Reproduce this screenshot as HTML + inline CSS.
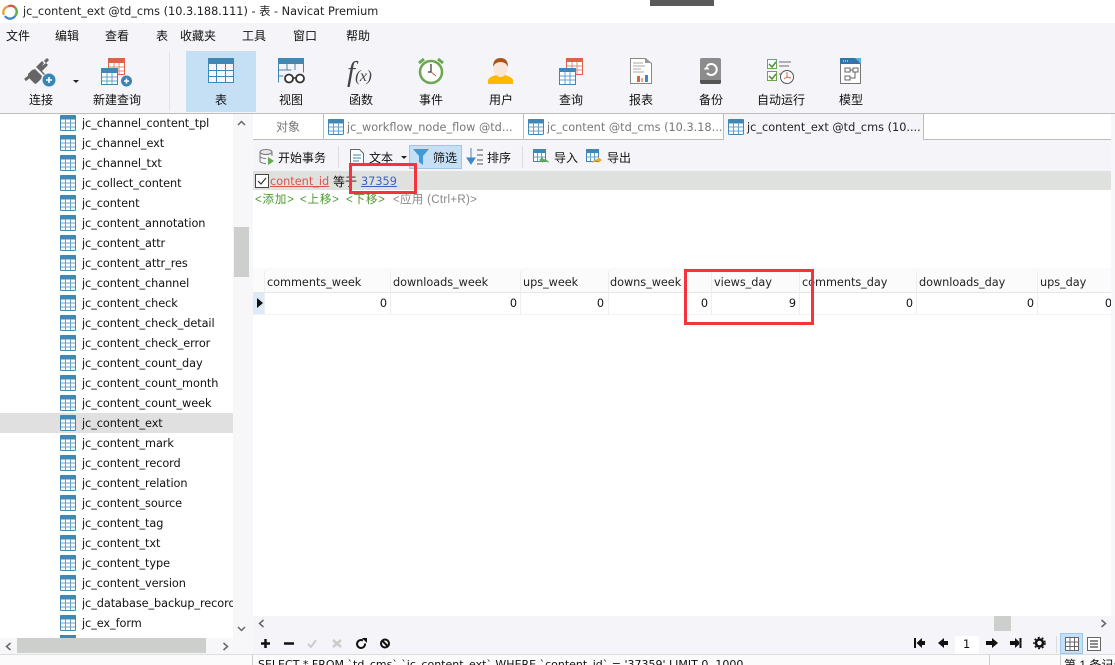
<!DOCTYPE html>
<html><head><meta charset="utf-8"><style>
html,body{margin:0;padding:0;width:1115px;height:665px;overflow:hidden;background:#fff}
body{position:relative;font-family:"Liberation Sans","Noto Sans CJK SC",sans-serif;font-size:12px;color:#111}
.a{position:absolute}
.t{position:absolute;white-space:nowrap;line-height:16px;height:16px}
.m{top:28px;font-size:12px}
.l{top:92px;font-size:12px;text-align:center;width:80px}
.r{left:82px;font-family:"DejaVu Sans",sans-serif;font-size:11.3px;letter-spacing:-.08px;margin-top:1px}
.tb{font-size:12px;top:150px}
.h{top:275px;font-family:"DejaVu Sans",sans-serif;font-size:11.3px;letter-spacing:-.05px;color:#222}
.d{top:296px;font-family:"DejaVu Sans",sans-serif;font-size:11.3px;text-align:right;width:30px}
.v{position:absolute;top:271px;width:1px;height:43px;background:#eeeeee}
.tab{top:120px;font-family:"DejaVu Sans",sans-serif;font-size:11.3px;color:#777}
.g{font-size:11.5px;top:192px;color:#4a9a2a;letter-spacing:.8px}
svg{position:absolute;overflow:visible}
svg:not([width]){width:16px;height:16px}
</style></head><body>
<svg width="0" height="0" style="position:absolute"><defs>
<g id="ti"><rect x=".5" y=".5" width="15" height="15" rx="1" fill="#fff" stroke="#3f87b5"/><rect x="0" y="0" width="16" height="4.5" rx="1" fill="#3f87b5"/><path d="M5.5 4v11M10.5 4v11M1 8h14M1 12h14" stroke="#62a3cd" fill="none"/></g>
</defs></svg>

<!-- title bar -->
<div class="a" style="left:650px;top:0;width:64px;height:6px;background:#5a5a5a"></div>
<svg style="left:2px;top:4px" width="16" height="16" viewBox="0 0 16 16" fill="none" stroke-width="2.4"><path d="M2 11A6 6 0 0 1 6 2.5" stroke="#e8a33c"/><path d="M6 2.5A6 6 0 0 1 13 3.5" stroke="#d9534f"/><path d="M13 3.5A6 6 0 0 1 13 12" stroke="#5fae4b"/><path d="M13 12A6 6 0 0 1 3 12" stroke="#3f87c5"/></svg>
<div class="t" style="left:23px;top:4px;font-family:'DejaVu Sans','Noto Sans CJK SC',sans-serif;font-size:11.3px;color:#222">jc_content_ext @td_cms (10.3.188.111) - 表 - Navicat Premium</div>

<!-- menu + toolbar -->
<div class="a" style="left:0;top:23px;width:1115px;height:90px;background:#f5f4f8"></div>
<div class="a" style="left:0;top:113px;width:1115px;height:1px;background:#bcbcbc"></div>
<div class="t m" style="left:6px">文件</div><div class="t m" style="left:55px">编辑</div><div class="t m" style="left:105px">查看</div><div class="t m" style="left:156px">表</div><div class="t m" style="left:180px">收藏夹</div><div class="t m" style="left:242px">工具</div><div class="t m" style="left:293px">窗口</div><div class="t m" style="left:346px">帮助</div>
<div class="a" style="left:169px;top:52px;width:1px;height:59px;background:#e2e2e4"></div>
<div class="a" style="left:186px;top:51px;width:70px;height:61px;background:#c5dff5"></div>

<!-- connect -->
<svg style="left:24px;top:58px" width="32" height="30" viewBox="0 0 32 30"><path d="M1 22l5-4" stroke="#666" stroke-width="3" fill="none"/><path d="M4 16l4-4 3-1 7 7-1 3-4 4-2 1-7-7z" fill="#666"/><path d="M12 9l6-6 2 2-2 3 4-3 2 2-6 6 3 3-1 1-9-9z" fill="#666"/><path d="M21 4l3-3" stroke="#666" stroke-width="3"/><circle cx="25" cy="22" r="6.5" fill="#3a85b8"/><path d="M22 22h6M25 19v6" stroke="#fff" stroke-width="1.6"/></svg>
<div class="a" style="left:73px;top:80px;border:3.5px solid transparent;border-top:3.5px solid #222"></div>
<div class="t l" style="left:1px">连接</div>
<!-- new query -->
<svg style="left:101px;top:58px" width="32" height="28" viewBox="0 0 32 28"><rect x="7.5" y=".5" width="16" height="16" fill="#fff" stroke="#d9644a"/><rect x="7" y="0" width="17" height="5" fill="#d9644a"/><path d="M13 5v11M18 5v11M8 9h15M8 13h15" stroke="#e08d78"/><rect x=".5" y="10.5" width="16" height="16" fill="#fff" stroke="#3f87b5"/><rect x="0" y="10" width="17" height="5" fill="#3f87b5"/><path d="M6 15v11M11 15v11M1 19h15M1 23h15" stroke="#62a3cd"/><circle cx="25.500" cy="23" r="5.500" fill="#3a85b8"/><path d="M23 23h5M25.500 20.500v5" stroke="#fff" stroke-width="1.500"/></svg>
<div class="t l" style="left:77px">新建查询</div>
<!-- table -->
<svg style="left:208px;top:58px" width="26" height="25" viewBox="0 0 26 25"><rect x=".5" y=".5" width="25" height="24" fill="#f2f8fd" stroke="#3f87b5"/><rect width="26" height="6" fill="#3f87b5"/><path d="M8.500 6v18M17.500 6v18M1 12.500h24M1 18.500h24" stroke="#3f87b5"/></svg>
<div class="t l" style="left:181px">表</div>
<!-- view -->
<svg style="left:278px;top:58px" width="28" height="26" viewBox="0 0 28 26"><path d="M.5 24.500V.5h25v14M.5 12h13M.5 18h5M9 6v6M17 6v6" fill="none" stroke="#3f87b5"/><rect width="26" height="6" fill="#3f87b5"/><circle cx="11" cy="20.500" r="4" fill="#fff" stroke="#333" stroke-width="1.800"/><circle cx="22" cy="20.500" r="4" fill="#fff" stroke="#333" stroke-width="1.800"/><path d="M15 20h3" stroke="#333" stroke-width="1.500"/></svg>
<div class="t l" style="left:251px">视图</div>
<!-- function -->
<div class="t" style="left:347px;top:60px;font-family:'Liberation Serif',serif;font-style:italic;font-size:29px;color:#444;line-height:24px;height:26px">f<span style="font-size:16px;letter-spacing:-.5px">(x)</span></div>
<div class="t l" style="left:321px">函数</div>
<!-- event -->
<svg style="left:417px;top:57px" width="28" height="28" viewBox="0 0 28 28"><circle cx="14" cy="15" r="11" fill="#fff" stroke="#6aa84f" stroke-width="2.500"/><path d="M2 6l5-4M26 6l-5-4" stroke="#6aa84f" stroke-width="3"/><path d="M14 7v8h-3" fill="none" stroke="#333" stroke-width="1.200"/><path d="M14 15l5 4" stroke="#d9534f"/></svg>
<div class="t l" style="left:391px">事件</div>
<!-- user -->
<svg style="left:488px;top:57px" width="25" height="27" viewBox="0 0 25 27"><path d="M0 27v-4q1-3 8-5h9q7 2 8 5v4z" fill="#fdb900"/><ellipse cx="12.500" cy="11" rx="7" ry="9" fill="#fbe4d8"/><path d="M5 10Q5 1 12.500 1T20 10Q18 5 12.500 5T5 10z" fill="#a5571f"/></svg>
<div class="t l" style="left:461px">用户</div>
<!-- query -->
<svg style="left:559px;top:58px" width="25" height="27" viewBox="0 0 25 27"><rect x="7.500" y=".5" width="16" height="16" fill="#fff" stroke="#d9644a"/><rect x="7" y="0" width="17" height="4" fill="#d9644a"/><path d="M13 4v12M18 4v12M8 8h15M8 12h15" stroke="#e08d78"/><rect x=".5" y="10.500" width="16" height="16" fill="#fff" stroke="#3f87b5"/><rect x="0" y="10" width="17" height="4" fill="#3f87b5"/><path d="M6 14v12M11 14v12M1 18h15M1 22h15" stroke="#62a3cd"/></svg>
<div class="t l" style="left:531px">查询</div>
<!-- report -->
<svg style="left:630px;top:58px" width="22" height="26" viewBox="0 0 22 26"><path d="M.5.5h15l6 5v20H.5z" fill="#fff" stroke="#888"/><path d="M15 0l6 5h-6z" fill="#999"/><path d="M3 5h10M3 8h12M3 11h8M3 14h11" stroke="#aaa"/><rect x="7" y="18" width="3" height="6" fill="#e0633f"/><rect x="11" y="20" width="2" height="4" fill="#e8a58f"/><rect x="15" y="17" width="3" height="7" fill="#3f87c5"/></svg>
<div class="t l" style="left:601px">报表</div>
<!-- backup -->
<svg style="left:700px;top:58px" width="21" height="26" viewBox="0 0 21 26"><rect width="21" height="26" rx="2" fill="#8c8c8c"/><path d="M0 22h21v2a2 2 0 0 1-2 2H2a2 2 0 0 1-2-2z" fill="#555"/><path d="M7 8a5.500 5.500 0 1 1 0 7" fill="none" stroke="#fff" stroke-width="2"/><path d="M3.500 11.500h6L7 8z" fill="#fff"/></svg>
<div class="t l" style="left:671px">备份</div>
<!-- autorun -->
<svg style="left:767px;top:59px" width="28" height="26" viewBox="0 0 28 26"><rect x=".5" y=".5" width="9" height="9" fill="#fff" stroke="#6aa84f"/><rect x=".5" y="12.500" width="9" height="9" fill="#fff" stroke="#6aa84f"/><path d="M2 5l3 3 4-5M2 17l3 3 4-5" fill="none" stroke="#4f8f35" stroke-width="1.500"/><path d="M12 3h12M12 7h10M12 15h4" stroke="#999" stroke-width="1.500"/><circle cx="20" cy="18" r="6.500" fill="#fff" stroke="#555"/><path d="M20 13v5l-3 2M20 18l4 1" stroke="#d9644a" fill="none"/></svg>
<div class="t" style="left:757px;top:92px">自动运行</div>
<!-- model -->
<svg style="left:840px;top:58px" width="22" height="26" viewBox="0 0 22 26"><rect x=".5" y=".5" width="20" height="25" fill="#fff" stroke="#777"/><rect width="21" height="6" fill="#2f77a8"/><path d="M15 0h6v6z" fill="#62b0e0"/><path d="M3 3h1M5 3h1M7 3h1" stroke="#fff"/><path d="M5 10h5v4H5zM13 10h5v4h-5zM5 18h5v4H5zM10 12h3M15 14v6h-5" fill="none" stroke="#666"/></svg>
<div class="t l" style="left:811px">模型</div>

<!-- sidebar -->
<div class="a" style="left:0;top:413px;width:233px;height:20px;background:#e0e0e0"></div>
<div class="a" style="left:233px;top:114px;width:20px;height:540px;background:#f7f6f8"></div>
<div class="a" style="left:234px;top:227px;width:15px;height:50px;background:#cdcfcc"></div>
<svg style="left:237px;top:120px" width="9" height="6"><path d="M1 5l3.500-3.500L8 5" fill="none" stroke="#666" stroke-width="1.500"/></svg>
<svg style="left:237px;top:626px" width="9" height="6"><path d="M1 1l3.500 3.500L8 1" fill="none" stroke="#666" stroke-width="1.500"/></svg>

<svg style="left:60px;top:115px"><use href="#ti"/></svg><div class="t r" style="top:115px">jc_channel_content_tpl</div>
<svg style="left:60px;top:135px"><use href="#ti"/></svg><div class="t r" style="top:135px">jc_channel_ext</div>
<svg style="left:60px;top:155px"><use href="#ti"/></svg><div class="t r" style="top:155px">jc_channel_txt</div>
<svg style="left:60px;top:175px"><use href="#ti"/></svg><div class="t r" style="top:175px">jc_collect_content</div>
<svg style="left:60px;top:195px"><use href="#ti"/></svg><div class="t r" style="top:195px">jc_content</div>
<svg style="left:60px;top:215px"><use href="#ti"/></svg><div class="t r" style="top:215px">jc_content_annotation</div>
<svg style="left:60px;top:235px"><use href="#ti"/></svg><div class="t r" style="top:235px">jc_content_attr</div>
<svg style="left:60px;top:255px"><use href="#ti"/></svg><div class="t r" style="top:255px">jc_content_attr_res</div>
<svg style="left:60px;top:275px"><use href="#ti"/></svg><div class="t r" style="top:275px">jc_content_channel</div>
<svg style="left:60px;top:295px"><use href="#ti"/></svg><div class="t r" style="top:295px">jc_content_check</div>
<svg style="left:60px;top:315px"><use href="#ti"/></svg><div class="t r" style="top:315px">jc_content_check_detail</div>
<svg style="left:60px;top:335px"><use href="#ti"/></svg><div class="t r" style="top:335px">jc_content_check_error</div>
<svg style="left:60px;top:355px"><use href="#ti"/></svg><div class="t r" style="top:355px">jc_content_count_day</div>
<svg style="left:60px;top:375px"><use href="#ti"/></svg><div class="t r" style="top:375px">jc_content_count_month</div>
<svg style="left:60px;top:395px"><use href="#ti"/></svg><div class="t r" style="top:395px">jc_content_count_week</div>
<svg style="left:60px;top:415px"><use href="#ti"/></svg><div class="t r" style="top:415px">jc_content_ext</div>
<svg style="left:60px;top:435px"><use href="#ti"/></svg><div class="t r" style="top:435px">jc_content_mark</div>
<svg style="left:60px;top:455px"><use href="#ti"/></svg><div class="t r" style="top:455px">jc_content_record</div>
<svg style="left:60px;top:475px"><use href="#ti"/></svg><div class="t r" style="top:475px">jc_content_relation</div>
<svg style="left:60px;top:495px"><use href="#ti"/></svg><div class="t r" style="top:495px">jc_content_source</div>
<svg style="left:60px;top:515px"><use href="#ti"/></svg><div class="t r" style="top:515px">jc_content_tag</div>
<svg style="left:60px;top:535px"><use href="#ti"/></svg><div class="t r" style="top:535px">jc_content_txt</div>
<svg style="left:60px;top:555px"><use href="#ti"/></svg><div class="t r" style="top:555px">jc_content_type</div>
<svg style="left:60px;top:575px"><use href="#ti"/></svg><div class="t r" style="top:575px">jc_content_version</div>
<svg style="left:60px;top:595px"><use href="#ti"/></svg><div class="t r" style="top:595px;width:151px;overflow:hidden">jc_database_backup_record</div>
<svg style="left:60px;top:615px"><use href="#ti"/></svg><div class="t r" style="top:615px">jc_ex_form</div>
<div class="a" style="left:60px;top:635px;width:16px;height:3px;background:#3f87b5"></div>

<!-- sidebar h scroll -->
<div class="a" style="left:0;top:638px;width:253px;height:16px;background:#f7f6f8"></div>
<div class="a" style="left:17px;top:638px;width:189px;height:15px;background:#cdcfcc"></div>
<svg style="left:5px;top:642px" width="7" height="9"><path d="M5.500 1L1.500 4.500 5.500 8" fill="none" stroke="#666" stroke-width="1.500"/></svg>
<svg style="left:222px;top:642px" width="7" height="9"><path d="M1.500 1L5.500 4.500 1.500 8" fill="none" stroke="#666" stroke-width="1.500"/></svg>

<!-- tabs -->
<div class="a" style="left:253px;top:114px;width:670px;height:26px;background:#fff"></div>
<div class="a" style="left:253px;top:139px;width:471px;height:1px;background:#bcbcbc"></div>
<div class="a" style="left:923px;top:139px;width:188px;height:1px;background:#bcbcbc"></div>
<div class="a" style="left:323px;top:114px;width:1px;height:26px;background:#bcbcbc"></div>
<div class="a" style="left:523px;top:114px;width:1px;height:26px;background:#bcbcbc"></div>
<div class="a" style="left:723px;top:114px;width:1px;height:26px;background:#bcbcbc"></div>
<div class="a" style="left:923px;top:114px;width:1px;height:26px;background:#bcbcbc"></div>
<div class="a" style="left:724px;top:114px;width:199px;height:27px;background:#f5f4f8"></div>
<div class="t" style="left:276px;top:119px;color:#777">对象</div>
<svg style="left:328px;top:119px"><use href="#ti"/></svg><div class="t tab" style="left:347px">jc_workflow_node_flow @td...</div>
<svg style="left:528px;top:119px"><use href="#ti"/></svg><div class="t tab" style="left:547px">jc_content @td_cms (10.3.18...</div>
<svg style="left:728px;top:119px"><use href="#ti"/></svg><div class="t tab" style="left:747px;color:#222">jc_content_ext @td_cms (10....</div>

<!-- content toolbar -->
<div class="a" style="left:253px;top:140px;width:858px;height:31px;background:#f5f4f8"></div>
<svg style="left:259px;top:149px" width="16" height="16" viewBox="0 0 16 16"><ellipse cx="7" cy="3" rx="6" ry="2.500" fill="#e8e8e8" stroke="#777"/><path d="M1 3v9c0 1.500 3 2.500 6 2.500M13 3v4M1 7c0 1.500 3 2.500 6 2.500" fill="none" stroke="#777"/><path d="M9 8l6 4-6 4z" fill="#5fae4b"/></svg>
<div class="t tb" style="left:278px">开始事务</div>
<div class="a" style="left:338px;top:146px;width:1px;height:22px;background:#ddd"></div>
<svg style="left:350px;top:149px" width="14" height="16" viewBox="0 0 14 16"><path d="M.5.5h9l4 4v11H.5z" fill="#fff" stroke="#666"/><path d="M3 6h8M3 9h8M3 12h6" stroke="#3f87b5"/></svg>
<div class="t tb" style="left:369px">文本</div>
<div class="a" style="left:401px;top:156px;border:3px solid transparent;border-top:3.500px solid #222"></div>
<div class="a" style="left:409px;top:145px;width:51px;height:22px;background:#c5dff5;border:1px solid #9cc7ea"></div>
<svg style="left:413px;top:149px" width="16" height="16" viewBox="0 0 16 16"><path d="M0 0h16L10 7v9l-4-3V7z" fill="#3f9ad6"/></svg>
<div class="t tb" style="left:433px">筛选</div>
<svg style="left:466px;top:148px" width="17" height="18" viewBox="0 0 17 18"><path d="M5 0v14M1 10l4 6 4-6z" fill="#3f87c5" stroke="#3f87c5"/><path d="M11 2h6M11 7h6M11 12h6M11 16h6" stroke="#555"/></svg>
<div class="t tb" style="left:487px">排序</div>
<div class="a" style="left:522px;top:146px;width:1px;height:22px;background:#ddd"></div>
<svg style="left:533px;top:149px" width="17" height="16" viewBox="0 0 17 16"><rect x=".5" y=".5" width="12" height="12" fill="#fff" stroke="#3f87b5"/><rect width="13" height="4" fill="#3f87b5"/><path d="M4.500 4v8M8.500 4v8M1 8h11" stroke="#62a3cd"/><path d="M16 14q-1-4-6-4V8l-4 3 4 3v-2q3 0 6 2z" fill="#5fae4b"/></svg>
<div class="t tb" style="left:554px">导入</div>
<svg style="left:586px;top:149px" width="17" height="16" viewBox="0 0 17 16"><rect x=".5" y=".5" width="12" height="12" fill="#fff" stroke="#3f87b5"/><rect width="13" height="4" fill="#3f87b5"/><path d="M4.500 4v8M8.500 4v8M1 8h11" stroke="#62a3cd"/><path d="M6 14q1-4 6-4V8l4 3-4 3v-2q-3 0-6 2z" fill="#eda62f"/></svg>
<div class="t tb" style="left:607px">导出</div>

<!-- filter -->
<div class="a" style="left:253px;top:171px;width:858px;height:19px;background:#dfe1de"></div>
<svg style="left:255px;top:174px" width="14" height="14" viewBox="0 0 14 14"><rect x=".5" y=".5" width="13" height="13" fill="#fff" stroke="#444"/><path d="M3 7l3 3 5-6" fill="none" stroke="#333" stroke-width="1.200"/></svg>
<div class="t" style="left:270px;top:174px;font-family:'DejaVu Sans',sans-serif;font-size:11.300px;color:#d9534f;text-decoration:underline">content_id</div>
<div class="t" style="left:333px;top:174px">等于</div>
<div class="t" style="left:361px;top:174px;font-family:'DejaVu Sans',sans-serif;font-size:11.300px;color:#3f5fc5;text-decoration:underline">37359</div>
<div class="t g" style="left:255px">&lt;添加&gt;</div>
<div class="t g" style="left:300px">&lt;上移&gt;</div>
<div class="t g" style="left:346px">&lt;下移&gt;</div>
<div class="t g" style="left:393px;color:#888;letter-spacing:.3px">&lt;应用 (Ctrl+R)&gt;</div>

<!-- grid -->
<div class="a" style="left:253px;top:268px;width:858px;height:3px;background:#fafafa"></div>
<div class="a" style="left:253px;top:271px;width:858px;height:21px;background:#fbfbfb"></div>
<div class="a" style="left:253px;top:292px;width:858px;height:1px;background:#e6e6e6"></div>
<div class="a" style="left:253px;top:314px;width:858px;height:1px;background:#f2f2f2"></div>
<div class="a" style="left:253px;top:293px;width:11px;height:21px;background:#ddeaf8"></div>
<div class="a" style="left:257px;top:298px;border:5px solid transparent;border-left:6px solid #111;border-right:0"></div>
<div class="v" style="left:264px"></div><div class="v" style="left:390px"></div><div class="v" style="left:520px"></div><div class="v" style="left:608px"></div><div class="v" style="left:711px"></div><div class="v" style="left:799px"></div><div class="v" style="left:916px"></div><div class="v" style="left:1037px"></div>
<div class="t h" style="left:267px">comments_week</div><div class="t h" style="left:393px">downloads_week</div><div class="t h" style="left:523px">ups_week</div><div class="t h" style="left:610px">downs_week</div><div class="t h" style="left:714px">views_day</div><div class="t h" style="left:802px">comments_day</div><div class="t h" style="left:919px">downloads_day</div><div class="t h" style="left:1040px">ups_day</div>
<div class="t d" style="left:357px">0</div><div class="t d" style="left:487px">0</div><div class="t d" style="left:574px">0</div><div class="t d" style="left:678px">0</div><div class="t d" style="left:766px">9</div><div class="t d" style="left:883px">0</div><div class="t d" style="left:1004px">0</div><div class="t d" style="left:1082px">0</div>

<!-- red boxes -->
<div class="a" style="left:349px;top:163px;width:62px;height:25px;border:3px solid #f4333c"></div>
<div class="a" style="left:684px;top:269px;width:124px;height:50px;border:3px solid #f4333c"></div>

<!-- bottom -->
<div class="a" style="left:1111px;top:114px;width:4px;height:540px;background:#f7f6f8"></div>
<div class="a" style="left:253px;top:616px;width:862px;height:38px;background:#f5f4f8"></div>
<div class="a" style="left:994px;top:616px;width:17px;height:15px;background:#cdcfcc"></div>
<svg style="left:258px;top:619px" width="7" height="9"><path d="M5.500 1L1.500 4.500 5.500 8" fill="none" stroke="#666" stroke-width="1.500"/></svg>
<svg style="left:1100px;top:619px" width="7" height="9"><path d="M1.500 1L5.500 4.500 1.500 8" fill="none" stroke="#666" stroke-width="1.500"/></svg>
<svg style="left:260px;top:638px" width="132" height="11" viewBox="0 0 132 11"><path d="M1 5.500h9M5.500 1v9M24 5.500h10" stroke="#111" stroke-width="2.500" fill="none"/><path d="M48 6l3 3 5-7" stroke="#ccc" stroke-width="2" fill="none"/><path d="M73 2l8 7M81 2l-8 7" stroke="#ccc" stroke-width="2.500"/><path d="M103 2.500a4 4 0 1 0 2 3" stroke="#111" stroke-width="2" fill="none"/><path d="M102 0l5 0v5z" fill="#111"/><circle cx="125" cy="5.500" r="4" stroke="#111" stroke-width="2" fill="none"/><path d="M122 2.500l6 6" stroke="#111" stroke-width="2"/></svg>
<svg style="left:914px;top:637px" width="136" height="13" viewBox="0 0 136 13"><path d="M0 1v10h2V1zM8 1L2.500 6 8 11V8h3V4H8z" fill="#111"/><path d="M30 1l-6 5 6 5V8h4V4h-4z" fill="#111"/><path d="M78 1l6 5-6 5V8h-6V4h6z" fill="#111"/><path d="M101 1l5.500 5-5.500 5V8h-5V4h5zM105.500 1v10h2V1z" fill="#111"/><circle cx="125.500" cy="6" r="3.500" fill="none" stroke="#111" stroke-width="2.500"/><circle cx="125.500" cy="6" r="5.500" fill="none" stroke="#111" stroke-width="1.500" stroke-dasharray="2 2"/></svg>
<div class="a" style="left:955px;top:636px;width:24px;height:18px;background:#fff"></div>
<div class="t" style="left:963px;top:637px;font-family:'DejaVu Sans',sans-serif;font-size:11.300px">1</div>
<div class="a" style="left:1056px;top:636px;width:1px;height:17px;background:#ddd"></div>
<div class="a" style="left:1060px;top:633px;width:21px;height:19px;background:#c5dff5;border:1px solid #9cc7ea"></div>
<svg style="left:1065px;top:637px" width="14" height="14" viewBox="0 0 14 14"><path d="M.5.500h13v13H.5zM.5 5h13M.5 9.500h13M5 .5v13M9.500 .5v13" fill="#fff" stroke="#666"/></svg>
<svg style="left:1087px;top:637px" width="14" height="14" viewBox="0 0 14 14"><path d="M.5.500h13v13H.5z" fill="#fff" stroke="#666"/><path d="M3 4h8M3 7h8M3 10h8" stroke="#666" stroke-width="1.500"/></svg>

<!-- status -->
<div class="a" style="left:0;top:654px;width:1115px;height:11px;background:#fbfbfb;border-top:1px solid #ddd;box-sizing:border-box;overflow:hidden"></div>
<div class="a" style="left:252px;top:655px;width:1px;height:10px;background:#ccc"></div>
<div class="a" style="left:989px;top:655px;width:1px;height:10px;background:#ccc"></div>
<div class="a" style="left:1060px;top:655px;width:1px;height:10px;background:#ccc"></div>
<div class="t" style="left:258px;top:657px;font-family:'DejaVu Sans',sans-serif;font-size:11px;height:8px;line-height:16px;overflow:hidden">SELECT * FROM `td_cms`.`jc_content_ext` WHERE `content_id` = '37359' LIMIT 0, 1000</div>
<div class="t" style="left:1064px;top:657px;height:8px;overflow:hidden">第 1 条记录</div>
</body></html>
